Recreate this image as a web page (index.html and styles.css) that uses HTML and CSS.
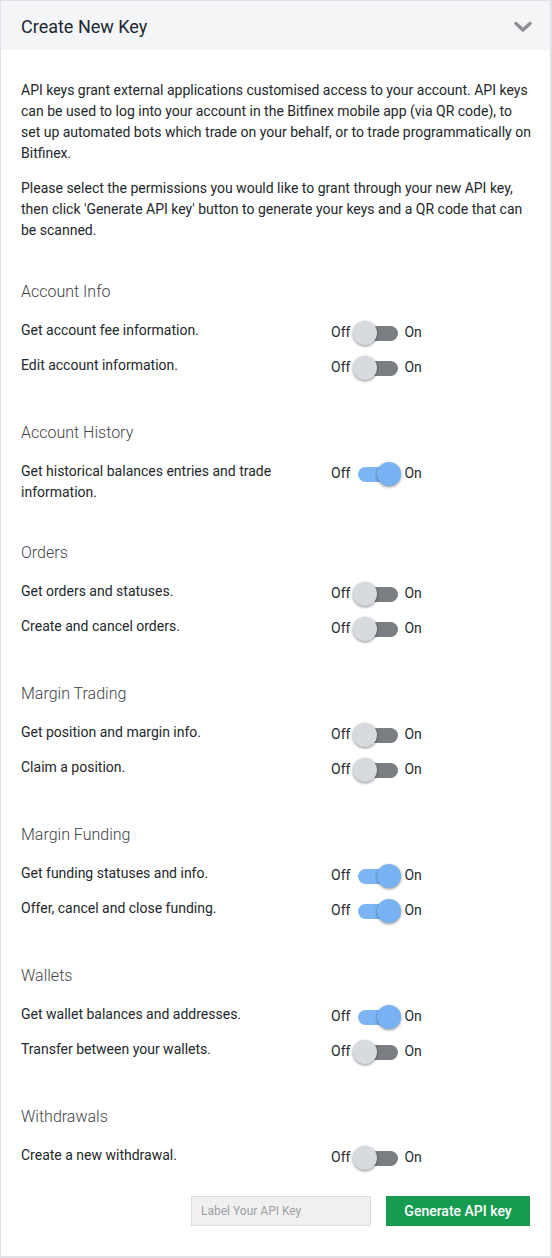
FILE: index.html
```html
<!DOCTYPE html>
<html lang="en">
<head>
<meta charset="utf-8">
<title>Create New Key</title>
<link rel="stylesheet" href="styles.css">
</head>
<body>
<div class="card">
  <div class="card-header">
    <h2 class="title">Create New Key</h2>
    <svg class="chevron" width="18" height="12" viewBox="0 0 18 12"><polyline points="2,2.5 9,9 16,2.5" fill="none" stroke="#8d8f92" stroke-width="3.4" stroke-linecap="round" stroke-linejoin="round"/></svg>
  </div>
  <div class="card-body">
    <div class="intro">
      <p>API keys grant external applications customised access to your account. API keys can be used to log into your account in the Bitfinex mobile app (via QR code), to set up automated bots which trade on your behalf, or to trade programmatically on Bitfinex.</p>
      <p>Please select the permissions you would like to grant through your new API key, then click 'Generate API key' button to generate your keys and a QR code that can be scanned.</p>
    </div>

    <div class="section">
      <h3 class="section-title">Account Info</h3>
      <div class="row"><div class="label">Get account fee information.</div><div class="toggle"><span>Off</span><span class="switch"><span class="track"></span><span class="thumb"></span></span><span>On</span></div></div>
      <div class="row"><div class="label">Edit account information.</div><div class="toggle"><span>Off</span><span class="switch"><span class="track"></span><span class="thumb"></span></span><span>On</span></div></div>
    </div>

    <div class="section">
      <h3 class="section-title">Account History</h3>
      <div class="row"><div class="label">Get historical balances entries and trade information.</div><div class="toggle"><span>Off</span><span class="switch on"><span class="track"></span><span class="thumb"></span></span><span>On</span></div></div>
    </div>

    <div class="section">
      <h3 class="section-title">Orders</h3>
      <div class="row"><div class="label">Get orders and statuses.</div><div class="toggle"><span>Off</span><span class="switch"><span class="track"></span><span class="thumb"></span></span><span>On</span></div></div>
      <div class="row"><div class="label">Create and cancel orders.</div><div class="toggle"><span>Off</span><span class="switch"><span class="track"></span><span class="thumb"></span></span><span>On</span></div></div>
    </div>

    <div class="section">
      <h3 class="section-title">Margin Trading</h3>
      <div class="row"><div class="label">Get position and margin info.</div><div class="toggle"><span>Off</span><span class="switch"><span class="track"></span><span class="thumb"></span></span><span>On</span></div></div>
      <div class="row"><div class="label">Claim a position.</div><div class="toggle"><span>Off</span><span class="switch"><span class="track"></span><span class="thumb"></span></span><span>On</span></div></div>
    </div>

    <div class="section">
      <h3 class="section-title">Margin Funding</h3>
      <div class="row"><div class="label">Get funding statuses and info.</div><div class="toggle"><span>Off</span><span class="switch on"><span class="track"></span><span class="thumb"></span></span><span>On</span></div></div>
      <div class="row"><div class="label">Offer, cancel and close funding.</div><div class="toggle"><span>Off</span><span class="switch on"><span class="track"></span><span class="thumb"></span></span><span>On</span></div></div>
    </div>

    <div class="section">
      <h3 class="section-title">Wallets</h3>
      <div class="row"><div class="label">Get wallet balances and addresses.</div><div class="toggle"><span>Off</span><span class="switch on"><span class="track"></span><span class="thumb"></span></span><span>On</span></div></div>
      <div class="row"><div class="label">Transfer between your wallets.</div><div class="toggle"><span>Off</span><span class="switch"><span class="track"></span><span class="thumb"></span></span><span>On</span></div></div>
    </div>

    <div class="section last">
      <h3 class="section-title">Withdrawals</h3>
      <div class="row"><div class="label">Create a new withdrawal.</div><div class="toggle"><span>Off</span><span class="switch"><span class="track"></span><span class="thumb"></span></span><span>On</span></div></div>
    </div>

    <div class="actions">
      <input class="key-input" type="text" placeholder="Label Your API Key">
      <button class="generate" type="button">Generate API key</button>
    </div>
  </div>
</div>
</body>
</html>
```

FILE: styles.css
```css
* { box-sizing: border-box; }
html, body { margin: 0; padding: 0; background: #ffffff; }
body {
  font-family: Roboto, "Liberation Sans", Arial, sans-serif;
  color: #23272b;
  font-size: 14px;
}
.card {
  width: 552px;
  height: 1258px;
  border: 1px solid #dfe1e5;
  border-right-width: 2px;
  border-bottom-width: 2px;
  background: #fff;
}
.card-header {
  height: 49px;
  background: #f4f5f7;
  display: flex;
  align-items: center;
  justify-content: space-between;
  padding: 0 18px 0 20px;
}
.title {
  margin: 0;
  font-size: 18px;
  font-weight: 400;
  color: #1d2733;
  line-height: 24px;
  padding-top: 2px;
}
.chevron { display: block; margin-top: 2px; }
.card-body {
  padding: 30px 16px 0 20px;
}
.intro p {
  margin: 0 0 14px 0;
  line-height: 21px;
}
.intro { margin-bottom: 39px; }
.section { margin-bottom: 38px; }
.section.last { margin-bottom: 23px; }
.section-title {
  margin: 0 0 16px 0;
  font-size: 16px;
  font-weight: 300;
  line-height: 24px;
  color: #3f4449;
}
.row {
  display: flex;
  align-items: flex-start;
  min-height: 28px;
  margin-bottom: 7px;
}
.label {
  flex: 0 0 270px;
  line-height: 21px;
  margin-right: 40px;
}
.toggle {
  display: flex;
  align-items: center;
  height: 21px;
  margin-top: 2px;
  line-height: 21px;
  color: #262a2e;
}
.switch {
  position: relative;
  display: block;
  width: 48px;
  height: 24px;
  margin: 0 3px 0 3px;
}
.track {
  position: absolute;
  left: 5px;
  top: 5px;
  width: 40px;
  height: 15px;
  border-radius: 8px;
  background: #7a7e82;
}
.thumb {
  position: absolute;
  left: 0;
  top: 0;
  width: 24px;
  height: 24px;
  border-radius: 50%;
  background: #d7dadf;
  box-shadow: 0 1px 3px rgba(0, 0, 0, 0.45);
}
.switch.on .track { background: #7db5f4; }
.switch.on .thumb { left: 24px; background: #78b2f3; }
.actions {
  display: flex;
  justify-content: flex-end;
  gap: 15px;
  padding-right: 4px;
}
.key-input {
  width: 180px;
  height: 30px;
  border: 1px solid #d9dde1;
  background: #f0f0f0;
  font-family: Roboto, "Liberation Sans", Arial, sans-serif;
  font-size: 12px;
  padding: 0 9px;
  color: #333;
  outline: none;
}
.key-input::placeholder { color: #9da1a5; }
.generate {
  width: 144px;
  height: 30px;
  border: none;
  background: #169b50;
  color: #fff;
  font-family: Roboto, "Liberation Sans", Arial, sans-serif;
  font-size: 14px;
  font-weight: 500;
  padding: 0;
}
```
